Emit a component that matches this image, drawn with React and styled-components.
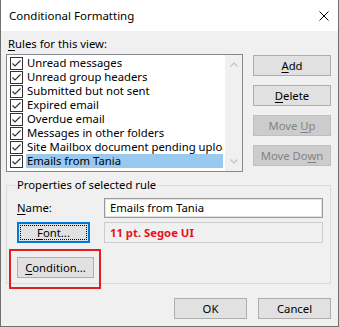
import React from 'react';
import styled, { createGlobalStyle } from 'styled-components';

const Global = createGlobalStyle`
  html, body { margin: 0; padding: 0; background: #ffffff; }
  body {
    font-family: "Noto Sans", "Open Sans", sans-serif;
    font-size: 11.3px;
    color: #000000;
  }
`;

const Window = styled.div`
  width: 339px;
  height: 327px;
  box-sizing: border-box;
  border: 1px solid #707070;
  border-top: none;
  display: flex;
  flex-direction: column;
  background: #f0f0f0;
`;

const TitleBar = styled.div`
  height: 31px;
  flex: none;
  background: #ffffff;
  display: flex;
  align-items: center;
  justify-content: space-between;
  padding: 0 9px 0 8px;
  box-sizing: border-box;
`;

const Title = styled.span`
  font-size: 11.5px;
  line-height: 16px;
  padding-top: 1px;
`;

const Content = styled.div`
  flex: 1;
  display: flex;
  flex-direction: column;
  padding: 6px 7px 0 5px;
`;

const Label = styled.div`
  line-height: 14px;
  padding-left: ${p => p.$indent || 0}px;
  margin-bottom: ${p => p.$gap || 0}px;
`;

const Key = styled.span`
  text-decoration: underline;
  text-underline-offset: 2px;
`;

const TopRow = styled.div`
  display: flex;
  gap: 10px;
`;

const ListBox = styled.div`
  width: 237px;
  height: 118px;
  box-sizing: border-box;
  border: 1px solid #828790;
  background: #ffffff;
  display: flex;
`;

const Items = styled.div`
  flex: 1;
  min-width: 0;
  padding: 1px 2px 0 3px;
`;

const Item = styled.div`
  display: flex;
  align-items: center;
  height: 14px;
  white-space: nowrap;
`;

const Box = styled.svg`
  flex: none;
  width: 13px;
  height: 13px;
  margin-right: 3px;
`;

const ItemText = styled.span`
  flex: 1;
  min-width: 0;
  overflow-x: clip;
  overflow-y: visible;
  line-height: 14px;
  padding-left: 1px;
  background: ${p => (p.$selected ? '#99c9ef' : 'transparent')};
`;

const ScrollBar = styled.div`
  width: 17px;
  flex: none;
  background: #f0f0f0;
  display: flex;
  flex-direction: column;
  justify-content: space-between;
`;

const Arrow = styled.div`
  height: 19px;
  display: flex;
  align-items: center;
  justify-content: center;
`;

const ButtonColumn = styled.div`
  width: 78px;
  display: flex;
  flex-direction: column;
  gap: 9px;
  padding-top: 1px;
`;

const Button = styled.button`
  width: ${p => p.$w || 78}px;
  height: 21px;
  box-sizing: border-box;
  margin: 0;
  padding: 0;
  font: inherit;
  line-height: 14px;
  white-space: pre;
  color: ${p => (p.disabled ? '#838383' : '#000000')};
  background: ${p => (p.disabled ? '#cccccc' : '#e1e1e1')};
  border: 1px solid ${p => (p.disabled ? '#bfbfbf' : p.$default ? '#0078d7' : '#adadad')};
  box-shadow: ${p => (p.$default ? 'inset 0 0 0 1px #0078d7' : 'none')};
  display: flex;
  align-items: center;
  justify-content: center;
`;

const Focus = styled.span`
  display: flex;
  align-items: center;
  justify-content: center;
  width: calc(100% - 6px);
  height: calc(100% - 6px);
  outline: 1px dotted #000000;
`;

const GroupBox = styled.div`
  position: relative;
  margin-top: 13px;
  border: 1px solid #dcdcdc;
  padding: 12px 9px 5px 10px;
  display: grid;
  grid-template-columns: 87px 219px;
  row-gap: 4px;
  align-items: center;
`;

const Legend = styled.span`
  position: absolute;
  top: -8px;
  left: 8px;
  padding: 0 2px;
  line-height: 14px;
  background: #f0f0f0;
`;

const Field = styled.div`
  height: ${p => p.$h}px;
  box-sizing: border-box;
  border: 1px solid ${p => (p.$readonly ? '#cccccc' : '#9a9a9a')};
  box-shadow: ${p => (p.$readonly ? 'none' : 'inset 0 0 0 1px #e3e3e3')};
  background: ${p => (p.$readonly ? '#f0f0f0' : '#ffffff')};
  padding-left: 5px;
  display: flex;
  align-items: center;
  line-height: 14px;
  font-weight: ${p => (p.$readonly ? 700 : 400)};
  color: ${p => (p.$readonly ? '#e81123' : '#000000')};
`;

const ConditionCell = styled.div`
  position: relative;
  grid-column: 1 / 2;
  margin-top: 10px;
  width: 77px;
`;

const Highlight = styled.div`
  position: absolute;
  top: -8px;
  left: -8px;
  right: -7px;
  bottom: -11px;
  border: 2px solid #e0201f;
  pointer-events: none;
`;

const Footer = styled.div`
  display: flex;
  justify-content: flex-end;
  gap: 11px;
  margin-top: 14px;
`;

const CheckBox = () => (
  <Box viewBox="0 0 13 13">
    <rect x="0.5" y="0.5" width="12" height="12" fill="#ffffff" stroke="#333333" />
    <path d="M2.5 6.5 L5 9 L10.5 3.5" fill="none" stroke="#333333" strokeWidth="1.2" />
  </Box>
);

const rules = [
  'Unread messages',
  'Unread group headers',
  'Submitted but not sent',
  'Expired email',
  'Overdue email',
  'Messages in other folders',
  'Site Mailbox document pending upload',
  'Emails from Tania',
];

export default function App() {
  return (
    <>
      <Global />
      <Window>
        <TitleBar>
          <Title>Conditional Formatting</Title>
          <svg width="10" height="10" viewBox="0 0 10 10">
            <path d="M0.5 0.5 L9.5 9.5 M9.5 0.5 L0.5 9.5" stroke="#000" strokeWidth="1" />
          </svg>
        </TitleBar>
        <Content>
          <Label $indent={2} $gap={3}>
            <Key>R</Key>ules for this view:
          </Label>
          <TopRow>
            <ListBox>
              <Items>
                {rules.map((r, i) => (
                  <Item key={r}>
                    <CheckBox />
                    <ItemText $selected={i === rules.length - 1}>{r}</ItemText>
                  </Item>
                ))}
              </Items>
              <ScrollBar>
                <Arrow>
                  <svg width="8" height="5" viewBox="0 0 8 5">
                    <path d="M0.5 4.5 L4 1 L7.5 4.5" fill="none" stroke="#c2c2c2" strokeWidth="1.2" />
                  </svg>
                </Arrow>
                <Arrow>
                  <svg width="8" height="5" viewBox="0 0 8 5">
                    <path d="M0.5 0.5 L4 4 L7.5 0.5" fill="none" stroke="#c2c2c2" strokeWidth="1.2" />
                  </svg>
                </Arrow>
              </ScrollBar>
            </ListBox>
            <ButtonColumn>
              <Button><span><Key>A</Key>dd</span></Button>
              <Button><span><Key>D</Key>elete</span></Button>
              <Button disabled><span>Move <Key>U</Key>p</span></Button>
              <Button disabled><span>Move Do<Key>w</Key>n</span></Button>
            </ButtonColumn>
          </TopRow>
          <GroupBox>
            <Legend>Properties of selected rule</Legend>
            <Label><Key>N</Key>ame:</Label>
            <Field $h={20}>Emails from Tania</Field>
            <Button $w={73} $default>
              <Focus><span><Key>F</Key>ont...</span></Focus>
            </Button>
            <Field $h={21} $readonly>11 pt. Segoe UI</Field>
            <ConditionCell>
              <Button $w={77}><span><Key>C</Key>ondition...</span></Button>
              <Highlight />
            </ConditionCell>
          </GroupBox>
          <Footer>
            <Button $w={73}><span>OK</span></Button>
            <Button $w={73}><span>Cancel</span></Button>
          </Footer>
        </Content>
      </Window>
    </>
  );
}
